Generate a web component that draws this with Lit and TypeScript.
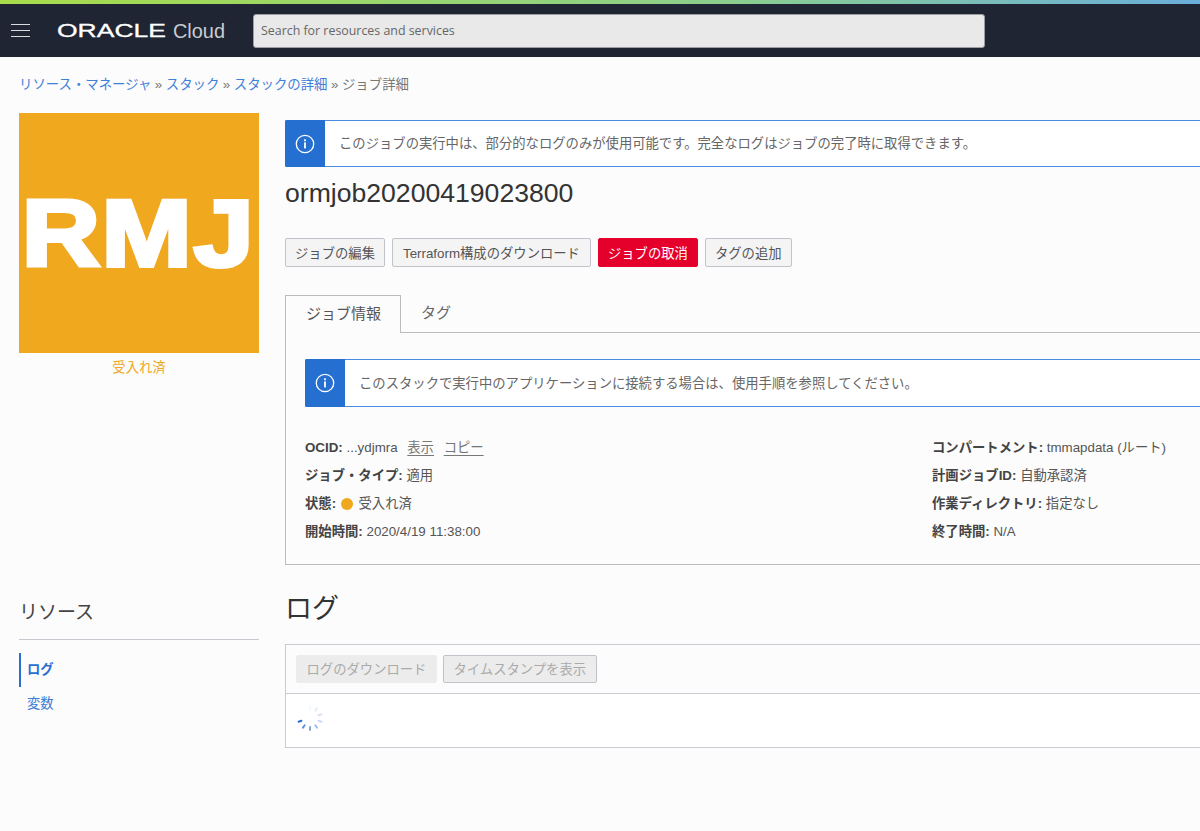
import { LitElement, html, css, svg } from "lit";
import { customElement } from "lit/decorators.js";

const infoIcon = html`<svg class="i-icon" viewBox="0 0 20 20" width="20" height="20" aria-hidden="true">
  <circle cx="10" cy="10" r="8.7" fill="none" stroke="#fff" stroke-width="1.3"></circle>
  <rect x="9.1" y="8.4" width="1.8" height="6" fill="#fff"></rect>
  <rect x="9.1" y="5.3" width="1.8" height="1.9" fill="#fff"></rect>
</svg>`;

const spinnerTicks = [0.05, 0.12, 0.2, 0.25, 0.45, 0.6, 0.75, 1, 0, 0];

@customElement("app-root")
export class AppRoot extends LitElement {
  static styles = css`
    :host {
      display: block;
      width: 1200px;
      height: 831px;
      overflow: hidden;
      background: #fcfcfc;
      color: #555;
      font-family: "Liberation Sans", "Noto Sans CJK JP", sans-serif;
      font-size: 13.33px;
    }
    * { box-sizing: border-box; }
    a { color: #3a7bd5; text-decoration: none; }
    .stripe { height: 4px; background: linear-gradient(90deg, #a8dc4a 0%, #8ccf8c 60%, #6aaedc 100%); }
    .topbar { height: 53px; background: #1f2533; display: flex; align-items: center; }
    .burger { width: 19px; margin-left: 11px; display: flex; flex-direction: column; gap: 5px; }
    .burger span { display: block; height: 1px; background: #d8dade; }
    .logo { margin-left: 27px; display: block; }
    .search {
      margin-left: 26px; width: 732px; height: 34px; background: #e9e9e9;
      border: 1px solid #9b9ea5; border-radius: 3px; padding: 0 7px;
      display: flex; align-items: center; color: #666; font-family: "Open Sans", sans-serif; font-size: 12.4px;
    }
    .crumbs { padding: 19px 0 0 19px; height: 56px; font-size: 13.4px; color: #777; line-height: 17px; }
    .crumbs a { color: #3f80d8; }
    .crumbs .sep { color: #777; margin: 0 3.5px; }
    .row { display: grid; grid-template-columns: 240px 930px; column-gap: 26px; padding-left: 19px; }
    .badge {
      width: 240px; height: 240px; background: #f0a81e; color: #fff;
      display: flex; align-items: center; justify-content: center;
      font-family: "Liberation Sans", sans-serif; font-weight: 700; font-size: 95px;
    }
    .badge span { display: block; transform: scaleX(1.14); -webkit-text-stroke: 4px #fff; letter-spacing: 1.5px; }
    .badge-label { margin-top: 7px; text-align: center; color: #f0a81e; line-height: 16px; }
    .detail { padding-top: 7px; }
    .alert {
      display: flex; height: 47px; background: #fff; border: 1px solid #4a8ae0; border-radius: 2px 0 0 2px;
      border-right: none; align-items: stretch; color: #666;
    }
    .alert.panel-alert { height: 48px; }
    .alert-ico { width: 40px; margin: -1px 0 -1px -1px; background: #246fd0; display: flex; align-items: center; justify-content: center; border-radius: 2px 0 0 2px; flex: none; }
    .alert-msg { display: flex; align-items: center; padding: 0 0 2px 14px; }
    h1 { margin: 12px 0 0; font-size: 26.6px; font-weight: 400; color: #333; line-height: 28px; height: 28px; }
    .actions { display: flex; gap: 7px; margin-top: 31px; }
    .btn {
      height: 29px; padding: 0 9px 1px; display: flex; align-items: center; font-size: 13.33px;
      background: #f4f4f5; color: #555; border: 1px solid #c0c3c9; border-radius: 2px;
    }
    .btn.wide { padding: 0 10px 1px; }
    .btn.danger { background: #e4002b; border-color: #e4002b; color: #fff; }
    .tabs { display: flex; height: 38px; margin-top: 28px; border-bottom: 1px solid #bcbcbc; }
    .tab { height: 37px; padding: 0 20px 4px; display: flex; align-items: center; font-size: 15px; color: #666; white-space: nowrap; }
    .tab.on { width: 116px; height: 38px; padding-right: 0; background: #fcfcfc; border: 1px solid #bcbcbc; border-bottom: none; color: #555; }
    .panel { height: 232px; border: 1px solid #bcbcbc; border-top: none; padding: 26px 0 0 19px; }
    .info { display: grid; grid-template-columns: 627px 1fr; margin-top: 27px; line-height: 28px; }
    .info-col { display: flex; flex-direction: column; }
    .info-row { height: 28px; white-space: nowrap; }
    .info-row b { color: #444; }
    .info-row u { color: #777; margin-left: 6px; text-underline-offset: 3px; }
    .dot { display: inline-block; width: 12px; height: 12px; margin: 0 2px 0 1px; border-radius: 50%; background: #f0a81e; vertical-align: -2px; }
    .lower { margin-top: 25px; }
    h2.res { margin: 0; font-size: 19px; font-weight: 400; line-height: 26px; padding: 10px 0 13px; color: #444; border-bottom: 1px solid #c5c8ce; height: 50px; }
    .nav { margin-top: 13px; display: flex; flex-direction: column; }
    .nav a { height: 34px; display: flex; align-items: center; padding: 0 0 4px 8px; color: #3a7bd5; }
    .nav a.on { font-weight: 700; border-left: 2px solid #2a6fd0; padding-left: 6px; color: #2a6fd0; }
    h2.log { margin: 0; padding-top: 1px; font-size: 27px; font-weight: 400; color: #333; line-height: 36px; height: 54px; }
    .logbox { border: 1px solid #c8cbd2; border-right: none; height: 104px; background: #fff; }
    .logbar { height: 49px; padding: 10px 0 0 10px; display: flex; gap: 6px; border-bottom: 1px solid #c8cbd2; background: #fcfcfc; }
    .dis { height: 28px; padding: 0 9.5px 1px; display: flex; align-items: center; color: #aaa; background: #ececec; border: 1px solid #ececec; border-radius: 2px; }
    .dis.lined { border-color: #c0c3c9; }
    .spin { display: block; margin: 9px 0 0 9px; }
  `;

  private row(label: string, value: unknown) {
    return html`<div class="info-row"><b>${label}:</b> ${value}</div>`;
  }

  render() {
    return html`
      <div class="stripe"></div>
      <header class="topbar">
        <div class="burger"><span></span><span></span><span></span></div>
        <svg class="logo" width="170" height="24" viewBox="0 0 170 24" role="img" aria-label="ORACLE Cloud">
          <text x="0" y="18" fill="#fff" stroke="#fff" stroke-width="0.3" font-family="Liberation Sans" font-size="18" textLength="109" lengthAdjust="spacingAndGlyphs">ORACLE</text>
          <text x="116" y="18.5" fill="#c9ccd1" font-family="Liberation Sans" font-size="20" textLength="52" lengthAdjust="spacingAndGlyphs">Cloud</text>
        </svg>
        <div class="search">Search for resources and services</div>
      </header>
      <nav class="crumbs">
        <a href="#">リソース・マネージャ</a><span class="sep">»</span><a href="#">スタック</a><span class="sep">»</span><a href="#">スタックの詳細</a><span class="sep">»</span>ジョブ詳細
      </nav>
      <div class="row">
        <aside>
          <div class="badge"><span>RMJ</span></div>
          <div class="badge-label">受入れ済</div>
        </aside>
        <main class="detail">
          <div class="alert">
            <div class="alert-ico">${infoIcon}</div>
            <div class="alert-msg">このジョブの実行中は、部分的なログのみが使用可能です。完全なログはジョブの完了時に取得できます。</div>
          </div>
          <h1>ormjob20200419023800</h1>
          <div class="actions">
            <div class="btn">ジョブの編集</div>
            <div class="btn wide">Terraform構成のダウンロード</div>
            <div class="btn danger">ジョブの取消</div>
            <div class="btn">タグの追加</div>
          </div>
          <div class="tabs">
            <div class="tab on">ジョブ情報</div>
            <div class="tab">タグ</div>
          </div>
          <div class="panel">
            <div class="alert panel-alert">
              <div class="alert-ico">${infoIcon}</div>
              <div class="alert-msg">このスタックで実行中のアプリケーションに接続する場合は、使用手順を参照してください。</div>
            </div>
            <div class="info">
              <div class="info-col">
                ${this.row("OCID", html`...ydjmra <u>表示</u> <u>コピー</u>`)}
                ${this.row("ジョブ・タイプ", "適用")}
                ${this.row("状態", html`<span class="dot"></span> 受入れ済`)}
                ${this.row("開始時間", "2020/4/19 11:38:00")}
              </div>
              <div class="info-col">
                ${this.row("コンパートメント", "tmmapdata (ルート)")}
                ${this.row("計画ジョブID", "自動承認済")}
                ${this.row("作業ディレクトリ", "指定なし")}
                ${this.row("終了時間", "N/A")}
              </div>
            </div>
          </div>
        </main>
      </div>
      <div class="row lower">
        <aside>
          <h2 class="res">リソース</h2>
          <div class="nav">
            <a class="on" href="#">ログ</a>
            <a href="#">変数</a>
          </div>
        </aside>
        <section>
          <h2 class="log">ログ</h2>
          <div class="logbox">
            <div class="logbar">
              <div class="dis">ログのダウンロード</div>
              <div class="dis lined">タイムスタンプを表示</div>
            </div>
            <svg class="spin" width="30" height="30" viewBox="0 0 30 30" aria-hidden="true">
              ${spinnerTicks.map((o, i) => svg`<rect x="14" y="2" width="2" height="5" rx="1" fill="#2a6fd0" opacity=${o} transform="rotate(${i * 36} 15 15)"></rect>`)}
            </svg>
          </div>
        </section>
      </div>
    `;
  }
}
